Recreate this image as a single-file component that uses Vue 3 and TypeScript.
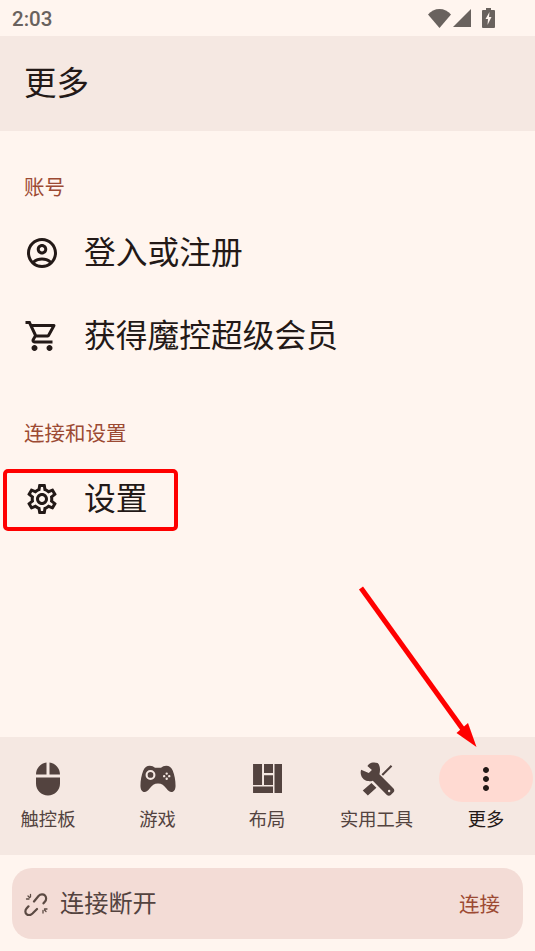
<script setup lang="ts">
interface NavItem {
  label: string;
  path: string;
  active?: boolean;
}

const mouse = 'M13 1.07V9h7c0-4.08-3.05-7.44-7-7.93zM4 15c0 4.42 3.58 8 8 8s8-3.58 8-8v-4H4v4zm7-13.93C7.05 1.56 4 4.92 4 9h7V1.07z'
const gamepad = 'M6.5 3.2C4.5 3.2 3 4.3 2.2 6.3 1 9.300.3 12.800.3 16.500c0 2.500 1 4.200 2.700 4.200 1.300 0 2.300-1 3.400-2.400C8 16.300 9.500 15 12 15s4 1.300 5.600 3.300c1.100 1.400 2.100 2.400 3.400 2.400 1.700 0 2.700-1.700 2.700-4.200 0-3.700-.7-7.200-1.900-10.200C21 4.300 19.500 3.200 17.500 3.200c-1.500 0-2.500.6-3.500 1.300h-4C9 3.800 8 3.200 6.500 3.200zM7 6a3.300 3.300 0 1 0 0 6.600A3.300 3.300 0 0 0 7 6zm0 1.400a1.900 1.900 0 1 1 0 3.800 1.900 1.900 0 0 1 0-3.800zM17.800 7.600a.8.8 0 1 0 0 1.600.8.8 0 0 0 0-1.600zm-1.700 1.700a.8.8 0 1 0 0 1.600.8.8 0 0 0 0-1.600zm3.400 0a.8.8 0 1 0 0 1.600.8.8 0 0 0 0-1.600zm-1.700 1.700a.8.8 0 1 0 0 1.600.8.8 0 0 0 0-1.600z'
const layout = 'M2.700 2h6v14h-6zM10 2h6v6h-6zM10 9.500h6V16h-6zM17 2h5v19.300h-5zM2.700 17H16v4.300H2.700z'
const tools = 'M12.400 1.400C9.800.5 6.800 1.200 5.600 3.300L8.600 6 6.500 8 1.400 5.800C.3 9.500 2.500 12.800 5.800 13.400c1.200.2 2.400.1 3.400-.3l9.400 9.600c.7.7 1.900.7 2.600 0l1.800-1.800c.7-.7.7-1.900 0-2.600L13.600 8.900c.7-2.600.6-5.900-1.200-7.500zM20.100 19.200a.8.8 0 1 1 0 1.600.8.8 0 0 1 0-1.600zM21.200 2.600l1 1-6.200 6.300-1-1zM8.300 14.600l3.300 3.300L5.900 23l-3.400-3.400z'
const dots = 'M12 8c1.100 0 2-.9 2-2s-.9-2-2-2-2 .9-2 2 .9 2 2 2zm0 2c-1.100 0-2 .9-2 2s.9 2 2 2 2-.9 2-2-.9-2-2-2zm0 6c-1.100 0-2 .9-2 2s.9 2 2 2 2-.9 2-2-.9-2-2-2z'

const navItems: NavItem[] = [
  { label: '触控板', path: mouse },
  { label: '游戏', path: gamepad },
  { label: '布局', path: layout },
  { label: '实用工具', path: tools },
  { label: '更多', path: dots, active: true }
]
</script>

<template>
  <div class="screen">
    <div class="status-bar">
      <span class="clock">2:03</span>
      <div class="status-icons">
        <svg width="23" height="19" viewBox="0 0 23 19"><path d="M0 5.500C3 2 7 0 11.500 0S20 2 23 5.500L11.500 19z" fill="#69625e" /></svg>
        <svg width="18" height="18" viewBox="0 0 18 18"><path d="M0 18 18 0v18z" fill="#69625e" /></svg>
        <svg class="battery" width="13" height="20" viewBox="0 0 13 20"><path d="M4 0h5v2h3a1 1 0 0 1 1 1v16a1 1 0 0 1-1 1H1a1 1 0 0 1-1-1V3a1 1 0 0 1 1-1h3z" fill="#69625e" /><path d="M7.500 4 3.500 11H6l-.5 6 4-8H7z" fill="#fff5ef" /></svg>
      </div>
    </div>

    <header class="title-bar">更多</header>

    <main class="content">
      <div class="section-label">账号</div>
      <div class="row">
        <svg class="row-icon" viewBox="0 0 24 24"><path d="M12 2C6.48 2 2 6.480 2 12s4.480 10 10 10 10-4.480 10-10S17.520 2 12 2zM7.350 18.500C8.660 17.560 10.260 17 12 17s3.340.56 4.650 1.500C15.340 19.440 13.740 20 12 20s-3.340-.56-4.650-1.500zm10.790-1.380C16.450 15.800 14.320 15 12 15s-4.450.8-6.140 2.120C4.700 15.730 4 13.950 4 12c0-4.420 3.580-8 8-8s8 3.580 8 8c0 1.950-.7 3.730-1.860 5.120z" /><path d="M12 6c-1.930 0-3.500 1.570-3.500 3.500S10.070 13 12 13s3.500-1.570 3.500-3.500S13.930 6 12 6zm0 5c-.83 0-1.500-.67-1.500-1.500S11.170 8 12 8s1.500.67 1.500 1.500S12.830 11 12 11z" /></svg>
        <span>登入或注册</span>
      </div>
      <div class="row">
        <svg class="row-icon" viewBox="0 0 24 24"><path d="M15.550 13c.75 0 1.410-.41 1.750-1.030l3.580-6.490c.37-.66-.11-1.480-.87-1.480H5.210l-.94-2H1v2h2l3.600 7.590-1.350 2.440C4.520 15.370 5.480 17 7 17h12v-2H7l1.100-2h7.450zM6.160 6h12.150l-2.760 5H8.530L6.160 6zM7 18c-1.100 0-1.990.9-1.990 2S5.900 22 7 22s2-.9 2-2-.9-2-2-2zm10 0c-1.100 0-1.990.9-1.990 2s.89 2 1.990 2 2-.9 2-2-.9-2-2-2z" /></svg>
        <span>获得魔控超级会员</span>
      </div>

      <div class="section-label section-label--second">连接和设置</div>
      <div class="row row--marked">
        <svg class="row-icon" viewBox="0 0 24 24"><path d="M19.430 12.980c.04-.32.07-.64.07-.98 0-.34-.03-.66-.07-.98l2.110-1.650c.19-.15.24-.42.12-.64l-2-3.460c-.09-.16-.26-.25-.44-.25-.06 0-.12.01-.17.03l-2.490 1c-.52-.4-1.080-.73-1.690-.98l-.38-2.650C14.460 2.180 14.250 2 14 2h-4c-.25 0-.46.18-.49.42l-.38 2.650c-.61.25-1.170.59-1.690.98l-2.490-1c-.06-.02-.12-.03-.18-.03-.17 0-.34.09-.43.25l-2 3.460c-.13.22-.07.49.12.64l2.110 1.650c-.04.32-.07.65-.07.98 0 .33.03.66.07.98l-2.110 1.650c-.19.15-.24.42-.12.64l2 3.460c.09.16.26.25.44.25.06 0 .12-.01.17-.03l2.490-1c.52.4 1.080.73 1.690.98l.38 2.650c.03.24.24.42.49.42h4c.25 0 .46-.18.49-.42l.38-2.650c.61-.25 1.170-.59 1.690-.98l2.490 1c.06.02.12.03.18.03.17 0 .34-.09.43-.25l2-3.460c.12-.22.07-.49-.12-.64l-2.110-1.650zm-1.980-1.710c.04.31.05.52.05.73 0 .21-.02.43-.05.73l-.14 1.130.89.7 1.080.84-.7 1.210-1.270-.51-1.040-.42-.9.68c-.43.32-.84.56-1.250.73l-1.060.43-.16 1.130-.2 1.350h-1.400l-.19-1.350-.16-1.130-1.060-.43c-.43-.18-.83-.41-1.230-.71l-.91-.7-1.060.43-1.270.51-.7-1.210 1.080-.84.89-.7-.14-1.130c-.03-.31-.05-.54-.05-.74s.02-.43.05-.73l.14-1.130-.89-.7-1.080-.84.7-1.210 1.270.51 1.040.42.9-.68c.43-.32.84-.56 1.250-.73l1.060-.43.16-1.130.2-1.350h1.390l.19 1.350.16 1.130 1.060.43c.43.18.83.41 1.230.71l.91.7 1.060-.43 1.270-.51.7 1.210-1.070.85-.89.7.14 1.130zM12 8c-2.210 0-4 1.790-4 4s1.790 4 4 4 4-1.790 4-4-1.790-4-4-4zm0 6c-1.100 0-2-.9-2-2s.9-2 2-2 2 .9 2 2-.9 2-2 2z" /></svg>
        <span>设置</span>
      </div>
    </main>

    <nav class="nav-bar">
      <div v-for="item in navItems" :key="item.label" class="nav-item" :class="{ 'nav-item--active': item.active }">
        <div class="nav-pill">
          <svg class="nav-icon" viewBox="0 0 24 24"><path fill-rule="evenodd" :d="item.path" /></svg>
        </div>
        <span class="nav-label">{{ item.label }}</span>
      </div>
    </nav>

    <div class="connection">
      <svg class="link-icon" viewBox="0 0 24 24" fill="none" stroke="#5b4a43" stroke-linecap="round">
        <path d="M10 9.500 14.500 4c2-2 5-2 6.500-.5s1.500 4.500 0 6l-1.500 1.800M13 17l-4.500 4.500c-2 1.800-4.500 2-6 .7s-1.500-4 0-5.700l2-2.200" stroke-width="2.200" />
        <path d="M6.500 2.500V5M2.500 7H5M4 4l1.500 1.500M19 21v-2.500M23 17h-2.500M22 19.500 20.500 18" stroke-width="1.300" />
      </svg>
      <span class="connection-text">连接断开</span>
      <span class="connection-action">连接</span>
    </div>

    <svg class="arrow" width="535" height="951" viewBox="0 0 535 951">
      <path d="M361 588 467 735" stroke="#ff0000" stroke-width="5" fill="none" />
      <path d="M476.500 747 456.500 733 468 723z" fill="#ff0000" />
    </svg>
  </div>
</template>

<style scoped>
.screen {
  position: relative;
  width: 535px;
  height: 951px;
  overflow: hidden;
  display: flex;
  flex-direction: column;
  background: #fff5ef;
  color: #231917;
  font-family: "Roboto", "Noto Sans CJK SC", sans-serif;
}

.status-bar {
  height: 36px;
  display: flex;
  align-items: center;
  justify-content: space-between;
  padding: 0 40px 0 12px;
  color: #69625e;
}

.clock {
  margin-top: 2px;
  font-size: 20.500px;
  font-weight: 500;
}

.status-icons {
  display: flex;
  align-items: center;
  gap: 2px;
}

.battery {
  margin-left: 9px;
}

.title-bar {
  height: 95px;
  box-sizing: border-box;
  display: flex;
  align-items: center;
  padding: 0 0 6px 24px;
  font-size: 32.500px;
  background: #f5e8e2;
}

.content {
  flex: 1;
  padding-top: 35px;
}

.section-label {
  height: 40px;
  margin-bottom: 5px;
  padding-left: 24px;
  display: flex;
  align-items: center;
  font-size: 20.500px;
  color: #9c4a33;
}

.section-label--second {
  margin-top: 35px;
}

.row {
  height: 83px;
  display: flex;
  align-items: center;
  gap: 24px;
  padding-left: 24px;
  font-size: 31.750px;
}

.row span {
  margin-bottom: 5px;
}

.row--marked {
  position: relative;
}

.row--marked::after {
  content: "";
  position: absolute;
  left: 3px;
  top: 12px;
  width: 175px;
  height: 62px;
  box-sizing: border-box;
  border: 4px solid #ff0000;
  border-radius: 5px;
}

.row-icon {
  width: 36px;
  height: 36px;
  fill: #231917;
}

.nav-bar {
  height: 118px;
  display: grid;
  grid-template-columns: repeat(5, 94px);
  column-gap: 15.500px;
  padding: 18px 0 0 1px;
  box-sizing: border-box;
  background: #f5e8e2;
}

.nav-item {
  display: flex;
  flex-direction: column;
  align-items: center;
  color: #53433f;
}

.nav-pill {
  width: 94px;
  height: 47px;
  display: flex;
  align-items: center;
  justify-content: center;
  border-radius: 24px;
}

.nav-item--active {
  color: #231917;
}

.nav-item--active .nav-pill {
  background: #ffdad2;
}

.nav-icon {
  width: 36px;
  height: 36px;
  fill: currentColor;
}

.nav-label {
  margin-top: 6px;
  font-size: 18.300px;
  line-height: 24px;
}

.connection {
  height: 71px;
  margin: 13px 12px 12px;
  padding: 0 23px 0 12px;
  display: flex;
  align-items: center;
  border-radius: 20px;
  background: #f3dcd6;
  color: #53433f;
}

.link-icon {
  width: 24px;
  height: 24px;
}

.connection-text {
  margin: 0 0 4px 12px;
  font-size: 24.200px;
  flex: 1;
}

.connection-action {
  margin-bottom: 2px;
  font-size: 20.500px;
  color: #9c4a33;
}

.arrow {
  position: absolute;
  left: 0;
  top: 0;
  pointer-events: none;
}
</style>
